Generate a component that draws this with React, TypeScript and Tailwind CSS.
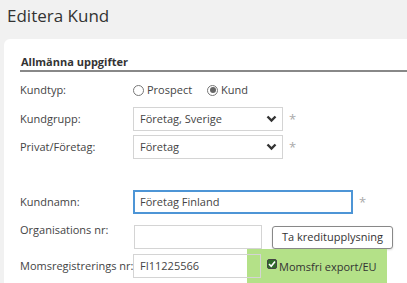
import React from "react";

function Chevron() {
  return (
    <svg width="11" height="8" viewBox="0 0 11 8" className="shrink-0">
      <path d="M1.5 1.5 L5.5 5.5 L9.5 1.5" fill="none" stroke="#333" strokeWidth="2.4" />
    </svg>
  );
}

function Radio({ checked, label }: { checked?: boolean; label: string }) {
  return (
    <label className="flex items-center gap-[3px]">
      <span className="w-[11px] h-[11px] rounded-full border border-[#777] bg-white flex items-center justify-center">
        {checked && <span className="w-[6px] h-[6px] rounded-full bg-[#666]" />}
      </span>
      <span>{label}</span>
    </label>
  );
}

function Select({ value }: { value: string }) {
  return (
    <div className="flex items-center gap-[6px]">
      <div className="w-[150px] h-[24px] border border-[#d4d4d4] bg-white flex items-center justify-between pl-[6px] pr-[5px]">
        <span>{value}</span>
        <Chevron />
      </div>
      <span className="text-[#aaa] text-[13px]">*</span>
    </div>
  );
}

export default function App() {
  return (
    <div
      className="w-[407px] h-[283px] overflow-hidden bg-[#f1f1f1] text-[#444] text-[11px] leading-[16px] whitespace-nowrap"
      style={{ fontFamily: '"Open Sans", "Liberation Sans", sans-serif' }}
    >
      <h1 className="pl-[7px] pt-[2px] text-[17px] leading-[28px] text-[#333]">Editera Kund</h1>
      <div className="ml-[4px] mt-[9px] bg-white rounded-tl-[6px] pl-[16px] pt-[15px] h-[300px]">
        <h2 className="font-bold text-[#333] text-[11px] leading-[15px] pb-[1px] border-b-2 border-[#888] pl-[1px]">
          Allmänna uppgifter
        </h2>
        <div className="grid grid-cols-[113px_1fr] items-center mt-[7px]">
          <span className="h-[22px] flex items-center">Kundtyp:</span>
          <div className="flex items-center gap-[15px] h-[22px]">
            <Radio label="Prospect" />
            <Radio label="Kund" checked />
          </div>

          <span className="mt-[6px]">Kundgrupp:</span>
          <div className="mt-[6px]">
            <Select value="Företag, Sverige" />
          </div>

          <span className="mt-[4px]">Privat/Företag:</span>
          <div className="mt-[4px]">
            <Select value="Företag" />
          </div>

          <span className="mt-[31px]">Kundnamn:</span>
          <div className="mt-[31px] flex items-center gap-[6px]">
            <div className="w-[220px] h-[24px] border-2 border-[#4d95d6] bg-white flex items-center pl-[5px]">
              Företag Finland
            </div>
            <span className="text-[#aaa] text-[13px]">*</span>
          </div>

          <span className="self-start mt-[8px]">Organisations nr:</span>
          <div className="mt-[11px] flex items-center gap-[10px]">
            <div className="w-[128px] h-[24px] border border-[#d4d4d4] bg-white ml-[1px]" />
            <button className="h-[23px] w-[121px] border border-[#888] rounded-[3px] bg-white text-[#333] shadow-[0_1px_2px_rgba(0,0,0,0.15)]">
              Ta kreditupplysning
            </button>
          </div>

          <span className="mt-[5px]">Momsregistrerings nr:</span>
          <div className="mt-[5px] flex items-center relative">
            <div className="absolute left-[114px] top-[-5px] w-[140px] h-[40px] bg-[#b4e188]" />
            <div className="relative w-[128px] h-[24px] border border-[#d4d4d4] flex items-center pl-[6px]">
              FI11225566
            </div>
            <label className="relative ml-[6px] flex items-center gap-[2px] text-[#333] mt-[2px]">
              <span className="w-[10px] h-[10px] -mt-[6px] rounded-[2px] bg-[#2f6a2a] border border-[#444] flex items-center justify-center">
                <svg width="8" height="8" viewBox="0 0 8 8">
                  <path d="M1 4 L3.2 6.2 L7 1.5" fill="none" stroke="#fff" strokeWidth="1.6" />
                </svg>
              </span>
              <span>Momsfri export/EU</span>
            </label>
          </div>
        </div>
      </div>
    </div>
  );
}
